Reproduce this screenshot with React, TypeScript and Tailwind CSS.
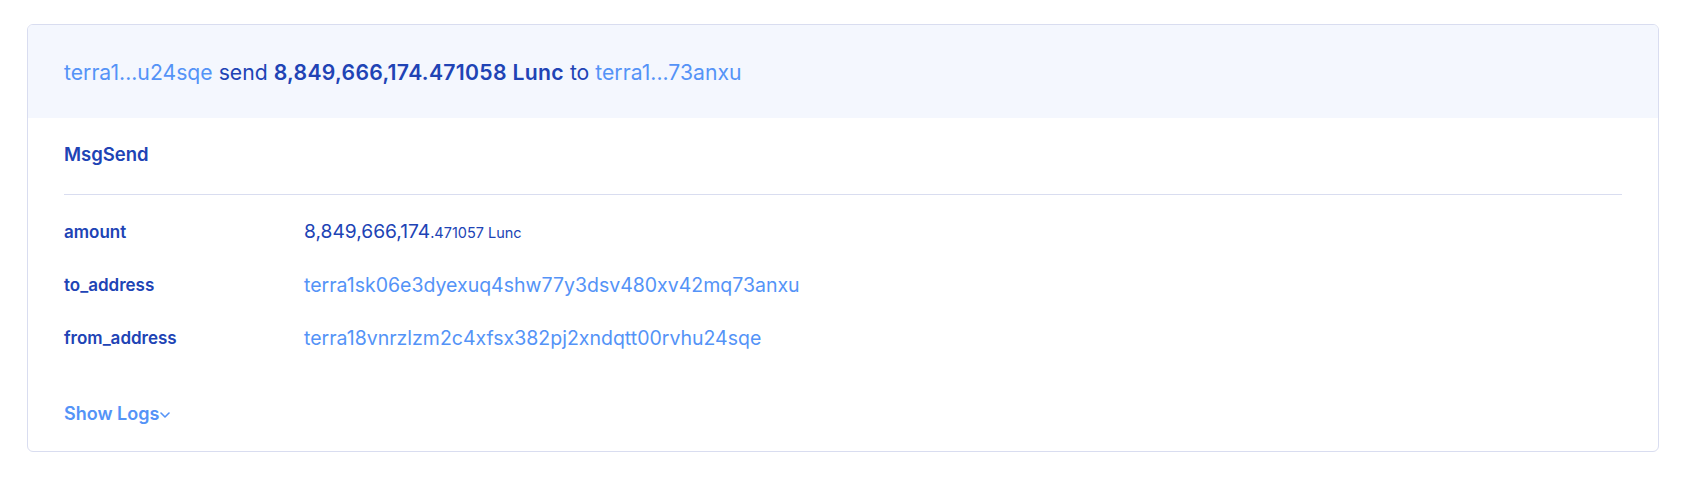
const font = { fontFamily: "Inter, 'Noto Sans', sans-serif" };

const rows = [
  { label: "amount", kind: "amount" },
  { label: "to_address", value: "terra1sk06e3dyexuq4shw77y3dsv480xv42mq73anxu" },
  { label: "from_address", value: "terra18vnrzlzm2c4xfsx382pj2xndqtt00rvhu24sqe" },
];

function ChevronDown() {
  return (
    <svg width="10" height="6" viewBox="0 0 10 6" fill="none" className="ml-[1px] mt-[2px]">
      <path d="M1 1l4 4 4-4" stroke="#5493f7" strokeWidth="1.6" strokeLinecap="round" strokeLinejoin="round" />
    </svg>
  );
}

export default function App() {
  return (
    <div className="bg-white min-h-screen pl-[27px] pr-[37px] pt-6" style={font}>
      <div className="border border-[#d9ddf0] rounded-[6px] overflow-hidden">
        <div className="h-[93px] flex items-center px-9 bg-[#f4f7fe] text-[21.2px] leading-7 text-[#2043b5]">
          <span className="text-[#5493f7]">terra1...u24sqe</span>
          <span className="whitespace-pre"> send </span>
          <span className="font-semibold tracking-[0.3px]">8,849,666,174.471058 Lunc</span>
          <span className="whitespace-pre"> to </span>
          <span className="text-[#5493f7]">terra1...73anxu</span>
        </div>
        <div className="px-9 pt-6 pb-[25px]">
          <div className="text-[18.5px] leading-6 font-semibold text-[#2043b5]">MsgSend</div>
          <div className="mt-7 border-t border-[#d9ddf0] pt-[10px]">
            {rows.map((r) => (
              <div key={r.label} className="flex items-center h-[53px]">
                <div className="w-[240px] shrink-0 text-[17px] leading-6 font-semibold text-[#2043b5]">{r.label}</div>
                {r.kind === "amount" ? (
                  <div className="text-[19.2px] leading-6 text-[#2043b5]">
                    8,849,666,174<span className="text-[14.5px]">.471057 Lunc</span>
                  </div>
                ) : (
                  <div className="text-[19.5px] leading-6 text-[#5493f7]">{r.value}</div>
                )}
              </div>
            ))}
          </div>
          <div className="mt-[38px] flex items-center text-[18px] leading-6 font-semibold text-[#5493f7]">
            Show Logs
            <ChevronDown />
          </div>
        </div>
      </div>
    </div>
  );
}
